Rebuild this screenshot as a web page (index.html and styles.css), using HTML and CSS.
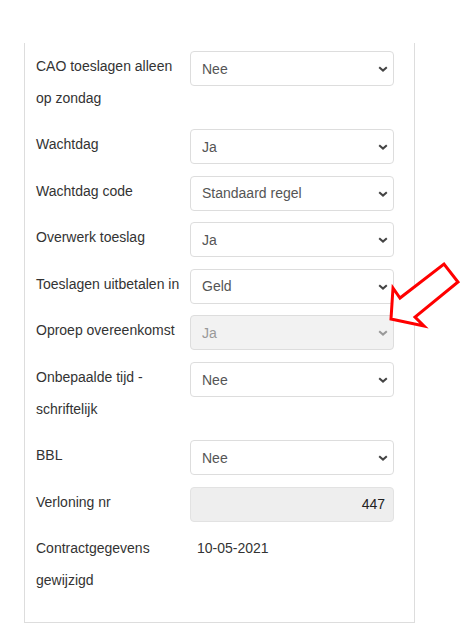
FILE: index.html
```html
<!DOCTYPE html>
<html lang="nl">
<head>
    <meta charset="UTF-8">
    <meta name="viewport" content="width=device-width, initial-scale=1.0">
    <title>Contractgegevens</title>
    <link rel="stylesheet" href="styles.css">
</head>
<body>
    <div class="panel">
        <div class="row">
            <label class="label">CAO toeslagen alleen op zondag</label>
            <div class="control">
                <select class="field"><option>Nee</option><option>Ja</option></select>
                <svg class="chevron" viewBox="0 0 10 6"><path d="M1.2 1.2 L5 4.6 L8.8 1.2"/></svg>
            </div>
        </div>

        <div class="row">
            <label class="label">Wachtdag</label>
            <div class="control">
                <select class="field"><option>Ja</option><option>Nee</option></select>
                <svg class="chevron" viewBox="0 0 10 6"><path d="M1.2 1.2 L5 4.6 L8.8 1.2"/></svg>
            </div>
        </div>

        <div class="row">
            <label class="label">Wachtdag code</label>
            <div class="control">
                <select class="field"><option>Standaard regel</option></select>
                <svg class="chevron" viewBox="0 0 10 6"><path d="M1.2 1.2 L5 4.6 L8.8 1.2"/></svg>
            </div>
        </div>

        <div class="row">
            <label class="label">Overwerk toeslag</label>
            <div class="control">
                <select class="field"><option>Ja</option><option>Nee</option></select>
                <svg class="chevron" viewBox="0 0 10 6"><path d="M1.2 1.2 L5 4.6 L8.8 1.2"/></svg>
            </div>
        </div>

        <div class="row">
            <label class="label">Toeslagen uitbetalen in</label>
            <div class="control">
                <select class="field"><option>Geld</option><option>Tijd</option></select>
                <svg class="chevron" viewBox="0 0 10 6"><path d="M1.2 1.2 L5 4.6 L8.8 1.2"/></svg>
            </div>
        </div>

        <div class="row">
            <label class="label">Oproep overeenkomst</label>
            <div class="control disabled">
                <select class="field" disabled><option>Ja</option></select>
                <svg class="chevron" viewBox="0 0 10 6"><path d="M1.2 1.2 L5 4.6 L8.8 1.2"/></svg>
            </div>
        </div>

        <div class="row">
            <label class="label">Onbepaalde tijd - schriftelijk</label>
            <div class="control">
                <select class="field"><option>Nee</option><option>Ja</option></select>
                <svg class="chevron" viewBox="0 0 10 6"><path d="M1.2 1.2 L5 4.6 L8.8 1.2"/></svg>
            </div>
        </div>

        <div class="row">
            <label class="label">BBL</label>
            <div class="control">
                <select class="field"><option>Nee</option><option>Ja</option></select>
                <svg class="chevron" viewBox="0 0 10 6"><path d="M1.2 1.2 L5 4.6 L8.8 1.2"/></svg>
            </div>
        </div>

        <div class="row">
            <label class="label">Verloning nr</label>
            <div class="control">
                <input class="field number" type="text" value="447" readonly>
            </div>
        </div>

        <div class="row">
            <label class="label">Contractgegevens gewijzigd</label>
            <div class="control">
                <div class="static">10-05-2021</div>
            </div>
        </div>
    </div>

    <svg class="pointer" width="80" height="75" viewBox="0 0 80 75">
        <polygon points="6,64 8,33 15,43 59,9 73,27 30,62 39,71"/>
    </svg>
</body>
</html>
```

FILE: styles.css
```css
body {
    margin: 0;
    background: #fff;
    font-family: "Liberation Sans", Arial, sans-serif;
    font-size: 14px;
    color: #333;
}
.panel {
    width: 391px;
    box-sizing: border-box;
    margin: 43px 0 0 24px;
    padding: 8px 20px 11px 11px;
    border: 1px solid #ddd;
    border-top: none;
}
.row {
    display: flex;
    align-items: flex-start;
    margin-bottom: 11.6px;
}
.label {
    width: 154px;
    flex: none;
    box-sizing: border-box;
    padding-right: 4px;
    padding-bottom: 3.5px;
    line-height: 31.5px;
}
.control {
    position: relative;
    flex: 1;
}
.field {
    display: block;
    width: 100%;
    height: 35px;
    box-sizing: border-box;
    margin: 0;
    padding: 0 30px 0 11px;
    border: 1px solid #ddd;
    border-radius: 4px;
    background: #fff;
    font-family: inherit;
    font-size: 14px;
    color: #555;
    -webkit-appearance: none;
    appearance: none;
    outline: none;
}
.field:disabled {
    background: #f2f2f2;
    color: #999;
    opacity: 1;
}
.number {
    background: #eee;
    text-align: right;
    padding-right: 8px;
    color: #222;
    border-color: #e2e2e2;
}
.chevron {
    position: absolute;
    right: 6px;
    top: 15px;
    width: 10px;
    height: 6px;
    fill: none;
    stroke: #444;
    stroke-width: 2;
    pointer-events: none;
}
.disabled .chevron {
    stroke: #999;
}
.static {
    padding-left: 7px;
    line-height: 31.5px;
    color: #333;
}
.pointer {
    position: absolute;
    left: 385px;
    top: 255px;
}
.pointer polygon {
    fill: #fff;
    stroke: #f00;
    stroke-width: 3;
    stroke-linejoin: miter;
}
```
